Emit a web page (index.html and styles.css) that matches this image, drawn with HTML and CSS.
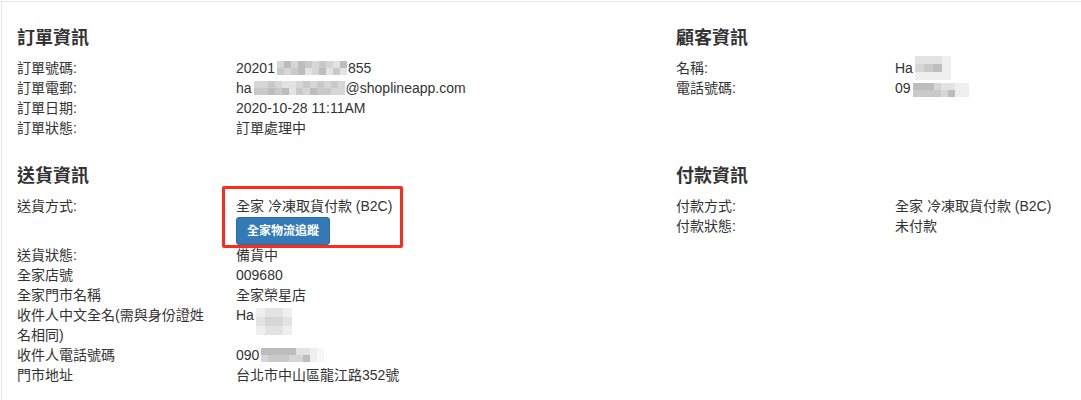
FILE: index.html
```html
<!DOCTYPE html>
<html lang="zh-Hant">
<head>
    <meta charset="UTF-8">
    <meta name="viewport" content="width=device-width, initial-scale=1.0">
    <title>訂單資訊</title>
    <link rel="stylesheet" href="styles.css">
</head>
<body>
    <div class="panel">
        <div class="panel-body">
            <!-- order -->
            <div class="section">
                <h4>訂單資訊</h4>
                <div class="info-row">
                    <div class="label">訂單號碼:</div>
                    <div class="value">20201<span class="mosaic m2"><i class="b"></i><i class="a"></i><i class="c"></i><i class="b"></i><i class="b"></i><i class="a"></i><i class="c"></i><i class="c"></i><i class="a"></i><i class="d"></i><i class="b"></i><i class="b"></i><i class="a"></i><i class="c"></i><i class="b"></i><i class="d"></i><i class="d"></i><i class="a"></i><i class="c"></i><i class="d"></i></span>855</div>
                </div>
                <div class="info-row">
                    <div class="label">訂單電郵:</div>
                    <div class="value">ha<span class="mosaic m2"><i class="b"></i><i class="a"></i><i class="b"></i><i class="a"></i><i class="a"></i><i class="c"></i><i class="b"></i><i class="a"></i><i class="d"></i><i class="c"></i><i class="d"></i><i class="d"></i><i class="b"></i><i class="a"></i><i class="a"></i><i class="b"></i><i class="b"></i><i class="c"></i><i class="a"></i><i class="a"></i><i class="b"></i><i class="a"></i><i class="a"></i><i class="b"></i><i class="b"></i><i class="b"></i></span>@shoplineapp.com</div>
                </div>
                <div class="info-row">
                    <div class="label">訂單日期:</div>
                    <div class="value">2020-10-28 11:11AM</div>
                </div>
                <div class="info-row">
                    <div class="label">訂單狀態:</div>
                    <div class="value">訂單處理中</div>
                </div>
            </div>

            <!-- customer -->
            <div class="section">
                <h4>顧客資訊</h4>
                <div class="info-row">
                    <div class="label">名稱:</div>
                    <div class="value">Ha<span class="mosaic m3"><i class="d"></i><i class="b"></i><i class="e"></i><i class="d"></i><i class="a"></i><i class="e"></i><i class="d"></i><i class="c"></i><i class="e"></i><i class="e"></i><i class="e"></i><i class="e"></i></span></div>
                </div>
                <div class="info-row">
                    <div class="label">電話號碼:</div>
                    <div class="value">09<span class="mosaic m2 phone-r"><i class="c"></i><i class="a"></i><i class="c"></i><i class="a"></i><i class="c"></i><i class="a"></i><i class="b"></i><i class="a"></i><i class="d"></i><i class="b"></i><i class="d"></i><i class="c"></i><i class="e"></i><i class="e"></i><i class="e"></i><i class="e"></i></span></div>
                </div>
            </div>

            <!-- shipping -->
            <div class="section">
                <h4>送貨資訊</h4>
                <div class="info-row">
                    <div class="label">送貨方式:</div>
                    <div class="value">
                        <div class="annotated">
                            全家 冷凍取貨付款 (B2C)
                            <div><button class="btn-primary" type="button">全家物流追蹤</button></div>
                            <span class="annot"></span>
                        </div>
                    </div>
                </div>
                <div class="info-row">
                    <div class="label">送貨狀態:</div>
                    <div class="value">備貨中</div>
                </div>
                <div class="info-row">
                    <div class="label">全家店號</div>
                    <div class="value">009680</div>
                </div>
                <div class="info-row">
                    <div class="label">全家門市名稱</div>
                    <div class="value">全家榮星店</div>
                </div>
                <div class="info-row">
                    <div class="label">收件人中文全名(需與身份證姓名相同)</div>
                    <div class="value">Ha<span class="mosaic m3 name-l"><i class="e"></i><i class="d"></i><i class="e"></i><i class="d"></i><i class="b"></i><i class="d"></i><i class="d"></i><i class="b"></i><i class="d"></i><i class="e"></i><i class="d"></i><i class="e"></i></span></div>
                </div>
                <div class="info-row">
                    <div class="label">收件人電話號碼</div>
                    <div class="value">090<span class="mosaic m2"><i class="c"></i><i class="b"></i><i class="c"></i><i class="a"></i><i class="c"></i><i class="a"></i><i class="c"></i><i class="a"></i><i class="c"></i><i class="b"></i><i class="d"></i><i class="b"></i><i class="d"></i><i class="c"></i><i class="e"></i><i class="e"></i><i class="f"></i><i class="f"></i></span></div>
                </div>
                <div class="info-row">
                    <div class="label">門市地址</div>
                    <div class="value">台北市中山區龍江路352號</div>
                </div>
            </div>

            <!-- payment -->
            <div class="section">
                <h4>付款資訊</h4>
                <div class="info-row">
                    <div class="label">付款方式:</div>
                    <div class="value">全家 冷凍取貨付款 (B2C)</div>
                </div>
                <div class="info-row">
                    <div class="label">付款狀態:</div>
                    <div class="value">未付款</div>
                </div>
            </div>
        </div>
    </div>
</body>
</html>
```

FILE: styles.css
```css
html, body {
    height: 100%;
}
body {
    margin: 0;
    padding: 1px 0 0 1px;
    box-sizing: border-box;
    overflow: hidden;
    background: #fff;
    color: #333;
    font-family: "Liberation Sans", "Noto Sans CJK TC", sans-serif;
    font-size: 14px;
    line-height: 20px;
}
.panel {
    height: 100%;
    box-sizing: border-box;
    border-top: 1px solid #e6e6e6;
    border-left: 1px solid #e6e6e6;
}
.panel-body {
    display: grid;
    grid-template-columns: 659px minmax(0, 1fr);
    row-gap: 28px;
    padding: 26px 15px 0;
}
.section h4 {
    margin: 0 0 10px;
    font-size: 18px;
    line-height: 20px;
    font-weight: bold;
}
.info-row {
    display: flex;
}
.info-row .label {
    flex: 0 0 219px;
    box-sizing: border-box;
    padding-right: 25px;
}
.info-row .value {
    flex: 1;
    min-width: 0;
}
.annotated {
    position: relative;
    display: inline-block;
}
.annot {
    position: absolute;
    left: -14px;
    top: -10px;
    width: 181px;
    height: 62px;
    box-sizing: border-box;
    border: 3px solid #fb2c1a;
    border-radius: 2px;
}
.btn-primary {
    display: block;
    margin-top: 1px;
    height: 28px;
    padding: 0 10px;
    border: 1px solid #2e6da4;
    border-radius: 3px;
    background: #337ab7;
    color: #fff;
    font-family: "Liberation Sans", "Noto Sans CJK TC", sans-serif;
    font-size: 12px;
    font-weight: bold;
    line-height: 26px;
}

/* pixelated blur over private data */
.mosaic {
    display: inline-grid;
    grid-auto-flow: column;
    grid-auto-columns: 7px;
    vertical-align: middle;
}
.mosaic.m2 {
    grid-template-rows: repeat(2, 7px);
    margin: -2px 1px 0 2px;
}
.mosaic.m3 {
    grid-template-rows: repeat(3, 8px);
    grid-auto-columns: 9px;
    margin: -6px 0 -4px 2px;
}
.mosaic.name-l {
    grid-template-rows: repeat(3, 9px);
    grid-auto-columns: 9px;
    margin: 0 0 -10px 2px;
}
.mosaic.phone-r {
    margin-top: 2px;
}
.mosaic .a { background: #c9c9c9; }
.mosaic .b { background: #d6d6d6; }
.mosaic .c { background: #bdbdbd; }
.mosaic .d { background: #e3e3e3; }
.mosaic .e { background: #efefef; }
.mosaic .f { background: #f7f7f7; }
```
